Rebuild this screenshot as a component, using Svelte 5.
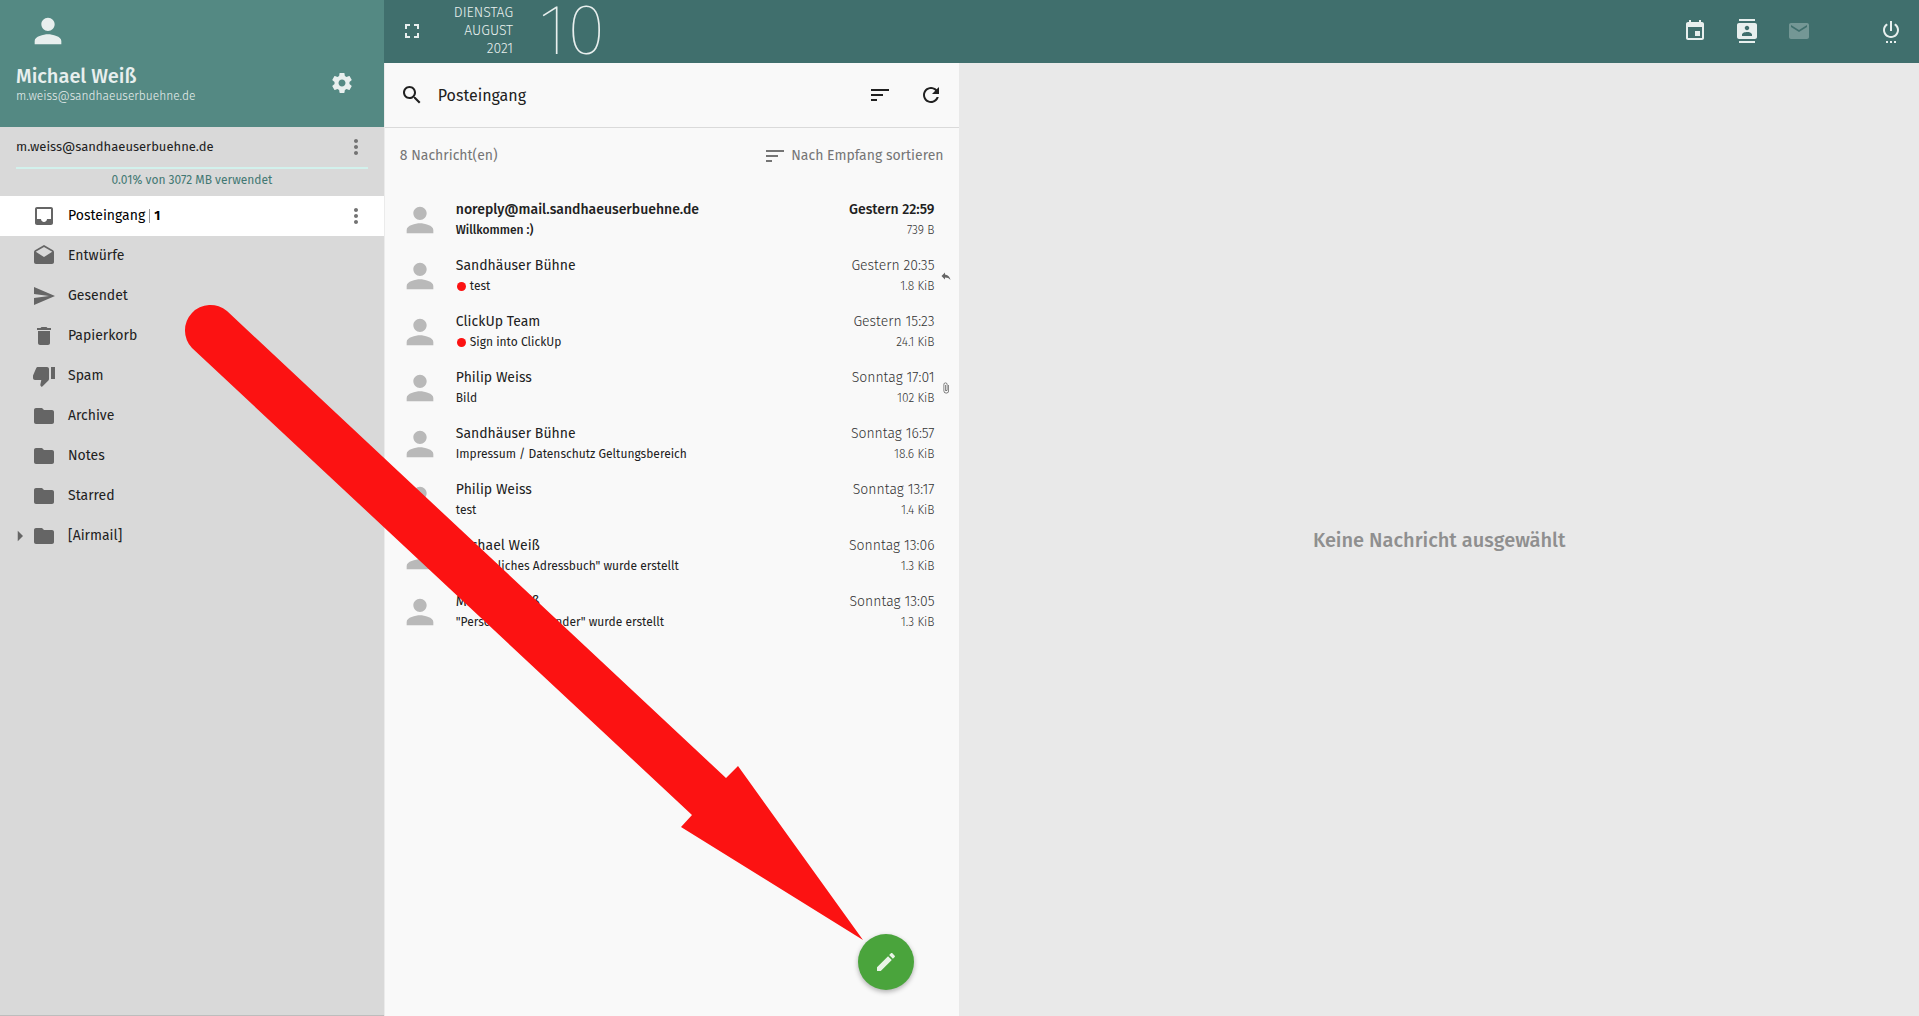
<script>
  const paths = {
    person: 'M12 12c2.21 0 4-1.79 4-4s-1.79-4-4-4-4 1.79-4 4 1.79 4 4 4zm0 2c-2.67 0-8 1.34-8 4v2h16v-2c0-2.66-5.33-4-8-4z',
    gear: 'M19.43 12.98c.04-.32.07-.64.07-.98s-.03-.66-.07-.98l2.11-1.65c.19-.15.24-.42.12-.64l-2-3.46c-.12-.22-.39-.3-.61-.22l-2.49 1c-.52-.4-1.08-.73-1.69-.98l-.38-2.65C14.46 2.18 14.25 2 14 2h-4c-.25 0-.46.18-.49.42l-.38 2.65c-.61.25-1.17.59-1.69.98l-2.49-1c-.23-.09-.49 0-.61.22l-2 3.46c-.13.22-.07.49.12.64l2.11 1.65c-.04.32-.07.65-.07.98s.03.66.07.98l-2.11 1.65c-.19.15-.24.42-.12.64l2 3.46c.12.22.39.3.61.22l2.49-1c.52.4 1.08.73 1.69.98l.38 2.65c.03.24.24.42.49.42h4c.25 0 .46-.18.49-.42l.38-2.65c.61-.25 1.17-.59 1.69-.98l2.49 1c.23.09.49 0 .61-.22l2-3.46c.12-.22.07-.49-.12-.64l-2.11-1.65zM12 15.5c-1.93 0-3.5-1.57-3.5-3.5s1.57-3.5 3.5-3.5 3.5 1.57 3.5 3.5-1.57 3.5-3.5 3.5z',
    more: 'M12 8c1.1 0 2-.9 2-2s-.9-2-2-2-2 .9-2 2 .9 2 2 2zm0 2c-1.1 0-2 .9-2 2s.9 2 2 2 2-.9 2-2-.9-2-2-2zm0 6c-1.1 0-2 .9-2 2s.9 2 2 2 2-.9 2-2-.9-2-2-2z',
    inbox: 'M19 3H4.99c-1.11 0-1.98.89-1.98 2L3 19c0 1.1.88 2 1.99 2H19c1.1 0 2-.9 2-2V5c0-1.11-.9-2-2-2zm0 12h-4c0 1.66-1.35 3-3 3s-3-1.34-3-3H4.99V5H19v10z',
    drafts: 'M21.99 8c0-.72-.37-1.35-.94-1.7L12 1 2.95 6.3C2.38 6.65 2 7.28 2 8v10c0 1.1.9 2 2 2h16c1.1 0 2-.9 2-2l-.01-10zM12 13L3.74 7.84 12 3l8.26 4.84L12 13z',
    send: 'M2.01 21L23 12 2.01 3 2 10l15 2-15 2z',
    trash: 'M6 19c0 1.1.9 2 2 2h8c1.1 0 2-.9 2-2V7H6v12zM19 4h-3.5l-1-1h-5l-1 1H5v2h14V4z',
    spam: 'M15 3H6c-.83 0-1.54.5-1.84 1.22l-3.02 7.05c-.09.23-.14.47-.14.73v2c0 1.1.9 2 2 2h6.31l-.95 4.57-.03.32c0 .41.17.79.44 1.06L9.83 23l6.59-6.59c.36-.36.58-.86.58-1.41V5c0-1.1-.9-2-2-2zm4 0v12h4V3h-4z',
    folder: 'M10 4H4c-1.1 0-1.99.9-1.99 2L2 18c0 1.1.9 2 2 2h16c1.1 0 2-.9 2-2V8c0-1.1-.9-2-2-2h-8l-2-2z',
    fullscreen: 'M7 14H5v5h5v-2H7v-3zm-2-4h2V7h3V5H5v5zm12 7h-3v2h5v-5h-2v3zM14 5v2h3v3h2V5h-5z',
    event: 'M17 12h-5v5h5v-5zM16 1v2H8V1H6v2H5c-1.11 0-1.99.9-1.99 2L3 19c0 1.1.89 2 2 2h14c1.1 0 2-.9 2-2V5c0-1.1-.9-2-2-2h-1V1h-2zm3 18H5V8h14v11z',
    contacts: 'M20 0H4v2h16V0zM4 24h16v-2H4v2zM20 4H4c-1.1 0-2 .9-2 2v12c0 1.1.9 2 2 2h16c1.1 0 2-.9 2-2V6c0-1.1-.9-2-2-2zm-8 2.75c1.24 0 2.25 1.01 2.25 2.25s-1.01 2.25-2.25 2.25S9.75 10.24 9.75 9 10.76 6.75 12 6.75zM17 17H7v-1.5c0-1.67 3.33-2.5 5-2.5s5 .83 5 2.5V17z',
    mail: 'M20 4H4c-1.1 0-1.99.9-1.99 2L2 18c0 1.1.9 2 2 2h16c1.1 0 2-.9 2-2V6c0-1.1-.9-2-2-2zm0 4l-8 5-8-5V6l8 5 8-5v2z',
    power: 'M7 24h2v-2H7v2zm4 0h2v-2h-2v2zm2-22h-2v10h2V2zm3.56 2.44l-1.45 1.45C16.84 6.94 18 8.83 18 11c0 3.31-2.69 6-6 6s-6-2.69-6-6c0-2.17 1.16-4.06 2.88-5.12L7.44 4.44C5.36 5.88 4 8.28 4 11c0 4.42 3.58 8 8 8s8-3.58 8-8c0-2.72-1.36-5.12-3.44-6.56zM15 24h2v-2h-2v2z',
    search: 'M15.5 14h-.79l-.28-.27C15.41 12.59 16 11.11 16 9.5 16 5.91 13.09 3 9.5 3S3 5.91 3 9.5 5.91 16 9.5 16c1.61 0 3.09-.59 4.23-1.57l.27.28v.79l5 4.99L20.49 19l-4.99-5zm-6 0C7.01 14 5 11.99 5 9.5S7.01 5 9.5 5 14 7.01 14 9.5 11.99 14 9.5 14z',
    sort: 'M3 18h6v-2H3v2zM3 6v2h18V6H3zm0 7h12v-2H3v2z',
    refresh: 'M17.65 6.35C16.2 4.9 14.21 4 12 4c-4.42 0-7.99 3.58-7.99 8s3.57 8 7.99 8c3.73 0 6.84-2.55 7.73-6h-2.08c-.82 2.33-3.04 4-5.65 4-3.31 0-6-2.69-6-6s2.69-6 6-6c1.66 0 3.14.69 4.22 1.78L13 11h7V4l-2.35 2.35z',
    edit: 'M3 17.25V21h3.75L17.81 9.94l-3.75-3.75L3 17.25zM20.71 7.04c.39-.39.39-1.02 0-1.41l-2.34-2.34c-.39-.39-1.02-.39-1.41 0l-1.83 1.83 3.75 3.75 1.83-1.83z',
    reply: 'M10 9V5l-7 7 7 7v-4.1c5 0 8.5 1.6 11 5.1-1-5-4-10-11-11z',
    clip: 'M16.5 6v11.5c0 2.21-1.79 4-4 4s-4-1.79-4-4V5c0-1.38 1.12-2.5 2.5-2.5s2.5 1.12 2.5 2.5v10.5c0 .55-.45 1-1 1s-1-.45-1-1V6H10v9.5c0 1.38 1.12 2.5 2.5 2.5s2.5-1.12 2.5-2.5V5c0-2.21-1.79-4-4-4S7 2.79 7 5v12.5c0 3.04 2.46 5.5 5.5 5.5s5.5-2.46 5.5-5.5V6h-1.5z',
    expand: 'M9 5v14l7-7z'
  };

  const folders = [
    { name: 'Posteingang', icon: 'inbox', unread: 1 },
    { name: 'Entwürfe', icon: 'drafts' },
    { name: 'Gesendet', icon: 'send' },
    { name: 'Papierkorb', icon: 'trash' },
    { name: 'Spam', icon: 'spam' },
    { name: 'Archive', icon: 'folder' },
    { name: 'Notes', icon: 'folder' },
    { name: 'Starred', icon: 'folder' },
    { name: '[Airmail]', icon: 'folder', nested: true }
  ];

  const messages = [
    { from: 'noreply@mail.sandhaeuserbuehne.de', subject: 'Willkommen :)', date: 'Gestern 22:59', size: '739 B', unread: true },
    { from: 'Sandhäuser Bühne', subject: 'test', date: 'Gestern 20:35', size: '1.8 KiB', dot: true, flag: 'reply' },
    { from: 'ClickUp Team', subject: 'Sign into ClickUp', date: 'Gestern 15:23', size: '24.1 KiB', dot: true },
    { from: 'Philip Weiss', subject: 'Bild', date: 'Sonntag 17:01', size: '102 KiB', flag: 'clip' },
    { from: 'Sandhäuser Bühne', subject: 'Impressum / Datenschutz Geltungsbereich', date: 'Sonntag 16:57', size: '18.6 KiB' },
    { from: 'Philip Weiss', subject: 'test', date: 'Sonntag 13:17', size: '1.4 KiB' },
    { from: 'Michael Weiß', subject: '"Persönliches Adressbuch" wurde erstellt', date: 'Sonntag 13:06', size: '1.3 KiB' },
    { from: 'Michael Weiß', subject: '"Persönlicher Kalender" wurde erstellt', date: 'Sonntag 13:05', size: '1.3 KiB' }
  ];

  let selected = $state('Posteingang');
</script>

{#snippet icon(name, size = '')}
  <svg class="icon {size}" viewBox="0 0 24 24" aria-hidden="true"><path d={paths[name]} /></svg>
{/snippet}

<div class="app">
  <aside class="sidebar">
    <header class="profile">
      <div class="portrait">{@render icon('person', 'large')}</div>
      <div class="identity">
        <div>
          <div class="name">Michael Weiß</div>
          <div class="address">m.weiss@sandhaeuserbuehne.de</div>
        </div>
        <button aria-label="Einstellungen">{@render icon('gear')}</button>
      </div>
    </header>
    <section class="account">
      <div class="account-row">
        <span>m.weiss@sandhaeuserbuehne.de</span>
        <button class="menu" aria-label="Kontomenü">{@render icon('more')}</button>
      </div>
      <div class="quota"></div>
      <div class="usage">0.01% von 3072 MB verwendet</div>
    </section>
    <nav>
      {#each folders as f}
        <div class="folder" class:active={selected === f.name}>
          <span class="twisty">{#if f.nested}{@render icon('expand', 'small')}{/if}</span>
          <button class="folder-link" onclick={() => (selected = f.name)}>
            {@render icon(f.icon)}
            <span>{f.name}</span>
            {#if f.unread}<span class="unread">{f.unread}</span>{/if}
          </button>
          {#if f.unread}<button class="menu" aria-label="Ordnermenü">{@render icon('more')}</button>{/if}
        </div>
      {/each}
    </nav>
  </aside>

  <div class="main">
    <header class="topbar">
      <button aria-label="Vollbild">{@render icon('fullscreen')}</button>
      <div class="date">
        <div class="date-text">DIENSTAG<br />AUGUST<br />2021</div>
        <div class="day">10</div>
      </div>
      <div class="modules">
        <button aria-label="Kalender">{@render icon('event')}</button>
        <button aria-label="Adressbuch">{@render icon('contacts')}</button>
        <button aria-label="E-Mail" disabled>{@render icon('mail')}</button>
      </div>
      <button aria-label="Abmelden">{@render icon('power')}</button>
    </header>

    <div class="panes">
      <section class="list">
        <header class="toolbar">
          <button aria-label="Suchen">{@render icon('search')}</button>
          <h1>Posteingang</h1>
          <button aria-label="Sortieren">{@render icon('sort')}</button>
          <button aria-label="Aktualisieren">{@render icon('refresh')}</button>
        </header>
        <div class="subheader">
          <span>8 Nachricht(en)</span>
          <button class="sorter">{@render icon('sort')}Nach Empfang sortieren</button>
        </div>
        <ul>
          {#each messages as m}
            <li class:fresh={m.unread}>
              {@render icon('person', 'large')}
              <div class="content">
                <div class="line first"><span>{m.from}</span><span class="when">{m.date}</span></div>
                <div class="line second">
                  <span class="subject">{#if m.dot}<i class="dot"></i>{/if}{m.subject}</span>
                  <span class="size">{m.size}</span>
                </div>
              </div>
              <div class="flag">{#if m.flag}{@render icon(m.flag, 'tiny')}{/if}</div>
            </li>
          {/each}
        </ul>
        <button class="compose" aria-label="Neue Nachricht">{@render icon('edit')}</button>
      </section>
      <section class="viewer"><p>Keine Nachricht ausgewählt</p></section>
    </div>
  </div>

  <svg class="pointer" width="700" height="660" viewBox="180 300 700 660" aria-hidden="true">
    <path d="M227 311 L726 778 L738 766 L863 940 L681 827 L692 815 L192 348 A25.500 25.500 0 0 1 227 311Z" />
  </svg>
</div>

<style>
  :global(body) {
    margin: 0;
  }
  .app {
    position: relative;
    display: flex;
    min-height: 100vh;
    font-family: "Fira Sans", "Noto Sans", sans-serif;
    font-size: 14px;
    line-height: 20px;
    color: #212121;
    background: #e9e9e9;
  }
  button {
    display: flex;
    align-items: center;
    padding: 0;
    border: 0;
    background: none;
    color: inherit;
    font: inherit;
    cursor: pointer;
  }
  .icon {
    display: block;
    flex: none;
    width: 24px;
    height: 24px;
    fill: currentColor;
  }
  .icon.large {
    width: 40px;
    height: 40px;
  }
  .icon.small {
    width: 18px;
    height: 18px;
  }
  .icon.tiny {
    width: 12px;
    height: 12px;
  }
  .sidebar {
    display: flex;
    flex-direction: column;
    flex: none;
    box-sizing: border-box;
    width: 20%;
    background: #d9d9d9;
    border-bottom: 1px solid #bdbdbd;
  }
  .profile {
    box-sizing: border-box;
    height: 127px;
    padding: 11px 30px 0 16px;
    background: #548983;
    color: #e8efee;
  }
  .portrait {
    padding-left: 12px;
  }
  .identity {
    display: flex;
    align-items: center;
    justify-content: space-between;
    padding-top: 12px;
  }
  .name {
    font-size: 20px;
    font-weight: 500;
    line-height: 26px;
  }
  .address {
    font-size: 12px;
    font-weight: 300;
    line-height: 14px;
  }
  .account {
    padding: 0 16px 6px;
  }
  .account-row {
    display: flex;
    align-items: center;
    justify-content: space-between;
    height: 40px;
    font-size: 13px;
  }
  .menu {
    color: #737373;
  }
  .quota {
    height: 2px;
    background: #d2f1ec;
  }
  .usage {
    padding-top: 1px;
    font-size: 12px;
    text-align: center;
    color: #437873;
  }
  .folder {
    display: flex;
    align-items: center;
    height: 40px;
    padding-right: 16px;
  }
  .folder.active {
    background: #fff;
    color: #000;
  }
  .twisty {
    display: flex;
    justify-content: flex-end;
    width: 29px;
    margin-right: 3px;
    color: #666;
  }
  .folder-link {
    flex: 1;
  }
  .folder-link .icon {
    margin-right: 12px;
    color: #656565;
  }
  .unread {
    margin-left: 4px;
    padding-left: 4px;
    border-left: 1px solid #999;
    font-size: 13px;
    font-weight: 700;
    line-height: 14px;
  }
  .main {
    display: flex;
    flex-direction: column;
    flex: 1;
    min-width: 0;
  }
  .topbar {
    display: flex;
    align-items: center;
    box-sizing: border-box;
    height: 63px;
    padding: 0 16px 2px;
    background: #406f6d;
    color: #e8efee;
  }
  .date {
    display: flex;
    align-items: center;
    flex: 1;
    gap: 26px;
    padding-left: 30px;
    font-weight: 300;
  }
  .date-text {
    line-height: 18px;
    text-align: right;
  }
  .day {
    font-size: 71px;
    font-weight: 100;
    line-height: 60px;
  }
  .modules {
    display: flex;
    gap: 28px;
    margin-right: 68px;
  }
  .modules button:disabled {
    color: #749795;
  }
  .panes {
    display: flex;
    flex: 1;
  }
  .list {
    position: relative;
    box-sizing: border-box;
    width: 37.5%;
    background: #f9f9f9;
    border-left: 1px solid #ebebeb;
  }
  .toolbar {
    display: flex;
    align-items: center;
    height: 64px;
    padding: 0 16px 0 15px;
    border-bottom: 1px solid #dadada;
  }
  h1 {
    flex: 1;
    margin: 0 0 0 14px;
    padding-top: 2px;
    font-size: 16px;
    font-weight: 400;
    line-height: 24px;
  }
  .toolbar button + button {
    margin-left: 27px;
  }
  .subheader {
    display: flex;
    align-items: center;
    justify-content: space-between;
    height: 56px;
    padding: 0 16px 0 15px;
    color: #757575;
  }
  .sorter .icon {
    margin-right: 4px;
  }
  ul {
    margin: 0;
    padding: 8px 0 0;
    list-style: none;
  }
  li {
    display: flex;
    align-items: center;
    height: 56px;
    padding-left: 15px;
  }
  li > .icon {
    color: #b9b9b9;
  }
  .content {
    flex: 1;
    margin-left: 16px;
  }
  .line {
    display: flex;
    justify-content: space-between;
  }
  .second {
    font-size: 12px;
  }
  .when,
  .size {
    color: #333;
    font-weight: 300;
  }
  .fresh .first,
  .fresh .when,
  .fresh .subject {
    color: #212121;
    font-weight: 500;
  }
  .subject {
    display: flex;
    align-items: center;
  }
  .dot {
    width: 9px;
    height: 9px;
    margin: 0 4px 0 1px;
    border-radius: 50%;
    background: #fc1212;
  }
  .flag {
    width: 19px;
    padding-left: 6px;
    color: #666;
  }
  .compose {
    position: absolute;
    right: 45px;
    bottom: 26px;
    justify-content: center;
    width: 56px;
    height: 56px;
    border-radius: 50%;
    background: #4aa43c;
    color: #e9f4e7;
    box-shadow: 0 2px 5px rgba(0, 0, 0, 0.3);
  }
  .viewer {
    display: flex;
    align-items: center;
    justify-content: center;
    flex: 1;
  }
  .viewer p {
    margin: 0;
    font-size: 20px;
    font-weight: 500;
    color: #8f8f8f;
  }
  .pointer {
    position: absolute;
    left: 180px;
    top: 300px;
    fill: #fc1212;
    pointer-events: none;
  }
</style>
